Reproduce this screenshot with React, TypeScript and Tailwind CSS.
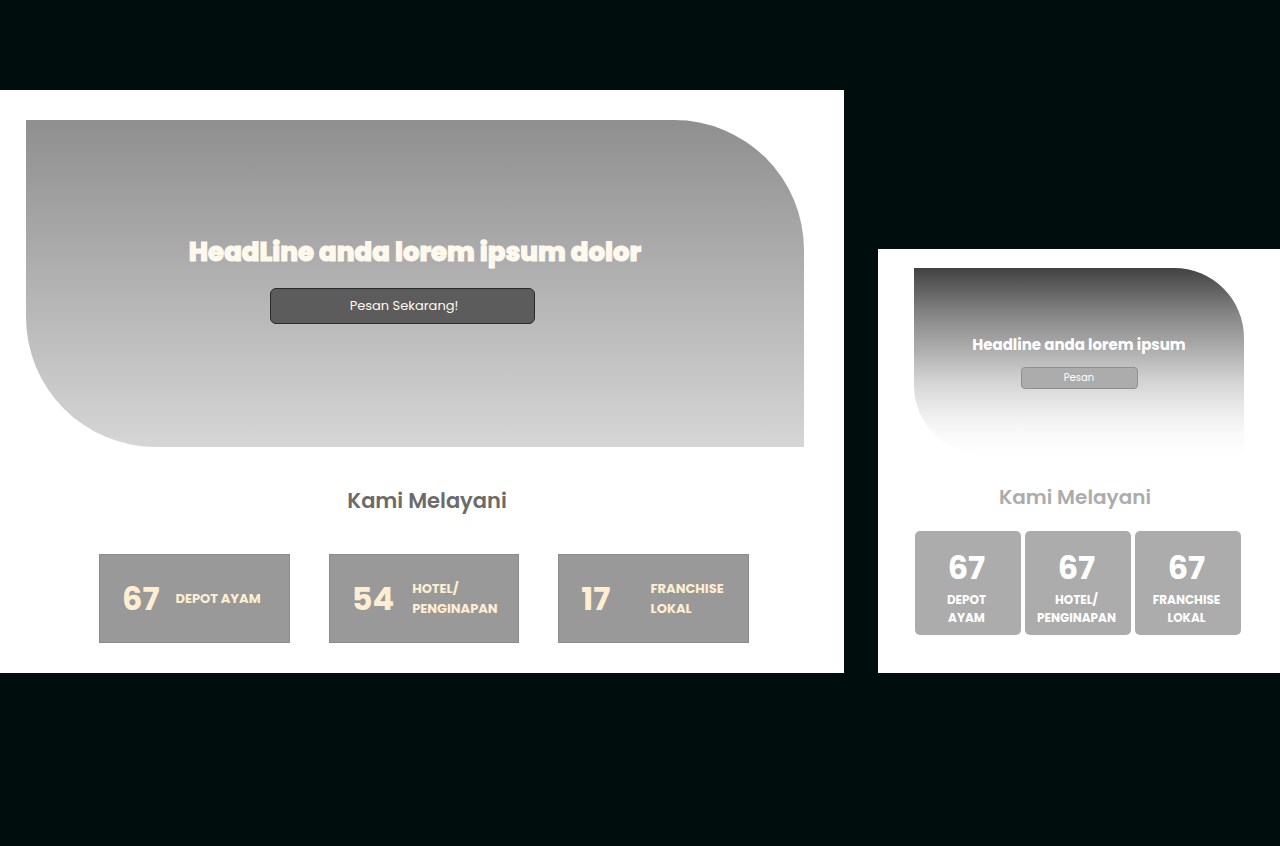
const desktopStats = [
  { value: "67", lines: ["DEPOT AYAM"], gap: "gap-4" },
  { value: "54", lines: ["HOTEL/", "PENGINAPAN"], gap: "gap-[18px]" },
  { value: "17", lines: ["FRANCHISE", "LOKAL"], gap: "gap-10" },
];

const mobileStats = [
  { value: "67", lines: ["DEPOT", "AYAM"] },
  { value: "67", lines: ["HOTEL/", "PENGINAPAN"] },
  { value: "67", lines: ["FRANCHISE", "LOKAL"] },
];

function DesktopPage() {
  return (
    <section className="min-w-0 bg-white pt-[30px] pb-[30px]">
      <div className="mr-10 ml-[26px] flex h-[327px] flex-col items-center rounded-tr-[130px] rounded-bl-[130px] bg-linear-to-b from-[#8f8f8f] to-[#d6d6d6] pt-[112px]">
        <h1 className="text-[26px] leading-10 font-extrabold whitespace-nowrap text-[#fff9ed] [-webkit-text-stroke:1px_#fff9ed]">
          HeadLine anda lorem ipsum dolor
        </h1>
        <button
          type="button"
          className="mt-4 mr-[26px] h-[36px] w-[265px] rounded-md border border-[#2b2b2b] bg-[#5c5c5c] pl-1 text-[13px] leading-5 text-[#fff9ed]"
        >
          Pesan Sekarang!
        </button>
      </div>
      <h2 className="mt-9 pl-[10px] text-center text-[21px] leading-9 font-semibold text-[#6b6b6b]">
        Kami Melayani
      </h2>
      <ul className="mt-[35px] mr-[95px] ml-[99px] grid grid-cols-3 gap-[39px]">
        {desktopStats.map((s) => (
          <li
            key={s.lines[0]}
            className={`flex h-[89px] items-center border border-[#8c8c8c] bg-[#999999] pl-[22px] text-[#ffefd2] ${s.gap}`}
          >
            <span className="text-[32px] leading-10 font-bold">{s.value}</span>
            <span className="text-[13px] leading-5 font-bold whitespace-nowrap">
              {s.lines.map((l) => (
                <span key={l} className="block">
                  {l}
                </span>
              ))}
            </span>
          </li>
        ))}
      </ul>
    </section>
  );
}

function MobilePage() {
  return (
    <section className="min-w-0 bg-white px-9 pt-[19px] pb-[38px]">
      <div className="flex h-[187px] flex-col items-center rounded-tr-[70px] rounded-bl-[70px] bg-[linear-gradient(to_bottom,#424242_0%,#868686_25%,#aaaaaa_42%,#d2d2d2_60%,#e9e9e9_74%,#f9f9f9_88%,#ffffff_100%)] pt-[65px]">
        <h2 className="text-[15px] leading-6 font-bold whitespace-nowrap text-white">
          Headline anda lorem ipsum
        </h2>
        <button
          type="button"
          className="mt-[10px] h-[22px] w-[117px] rounded border border-[#8f8f8f] bg-[#acacac] text-[10px] leading-4 text-white"
        >
          Pesan
        </button>
      </div>
      <h2 className="mt-6 pr-2 text-center text-[20px] leading-9 font-semibold text-[#acacac]">
        Kami Melayani
      </h2>
      <ul className="mt-4 mr-[3px] ml-px grid grid-cols-3 gap-1">
        {mobileStats.map((s) => (
          <li
            key={s.lines[0]}
            className="flex h-[104px] flex-col items-center rounded-[5px] bg-[#acacac] pt-[17px] pr-[3px] text-center text-white"
          >
            <span className="text-[32px] leading-10 font-bold">{s.value}</span>
            <span className="mt-[3px] text-[12px] leading-[18px] font-bold">
              {s.lines.map((l) => (
                <span key={l} className="block">
                  {l}
                </span>
              ))}
            </span>
          </li>
        ))}
      </ul>
    </section>
  );
}

export default function App() {
  return (
    <main className="min-h-screen bg-[#000d0d] pt-[90px] font-['Poppins','Inter',sans-serif]">
      <div className="grid grid-cols-[844fr_402fr] items-end gap-[34px]">
        <DesktopPage />
        <MobilePage />
      </div>
    </main>
  );
}
